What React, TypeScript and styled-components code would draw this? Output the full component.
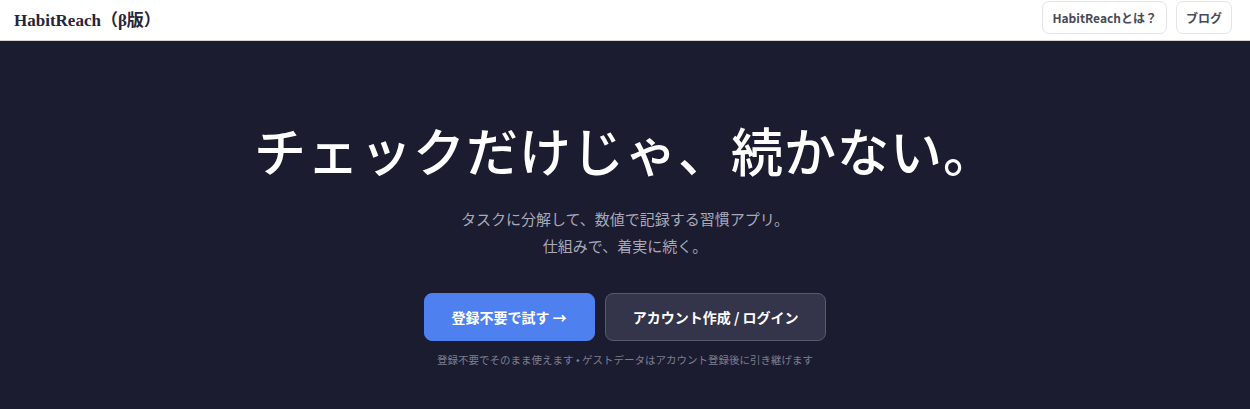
import React from 'react'
import styled, { createGlobalStyle } from 'styled-components'

const GlobalStyle = createGlobalStyle`
    body {
        margin: 0;
        background: #1b1c30;
        font-family: "Noto Sans CJK JP", "Noto Sans", sans-serif;
    }
`

const Header = styled.header`
    height: 40px;
    background: #ffffff;
    border-bottom: 1px solid #d8d4cc;
    display: flex;
    align-items: center;
    justify-content: space-between;
    padding: 0 18px 0 14px;
`

const Logo = styled.div`
    font-family: "Liberation Serif", "Noto Sans CJK JP", serif;
    font-weight: 700;
    font-size: 17px;
    color: #26263a;
    margin-top: -4px;
`

const NavLinks = styled.nav`
    display: flex;
    gap: 9px;
    margin-top: -6px;
`

const NavButton = styled.a`
    height: 31px;
    padding: 0 9px;
    display: flex;
    align-items: center;
    border: 1px solid #e4e4e8;
    border-radius: 7px;
    font-size: 12px;
    font-weight: 700;
    color: #4a4a58;
    text-decoration: none;
    background: #fff;
`

const Hero = styled.main`
    display: flex;
    flex-direction: column;
    align-items: center;
    padding-top: 82px;
    padding-bottom: 40px;
`

const Title = styled.h1`
    margin: 0;
    font-family: "Liberation Serif", "Noto Sans CJK JP", serif;
    font-weight: 500;
    font-size: 52px;
    line-height: 64px;
    color: #ffffff;
    letter-spacing: 1px;
`

const Lead = styled.p`
    margin: 18px 0 0;
    font-size: 15px;
    line-height: 27px;
    color: #a9a9b8;
    text-align: center;
`

const Actions = styled.div`
    display: flex;
    gap: 10px;
    margin-top: 34px;
`

const ActionButton = styled.button<{ $primary?: boolean }>`
    height: 48px;
    padding: 0 27px;
    border-radius: 8px;
    font-family: "Noto Sans CJK JP", sans-serif;
    font-size: 14px;
    font-weight: 700;
    color: #ffffff;
    cursor: pointer;
    background: ${p => (p.$primary ? '#4f80f0' : '#34344a')};
    border: 1px solid ${p => (p.$primary ? '#4f80f0' : '#5a5a6e')};
`

const Note = styled.p`
    margin: 11px 0 0;
    font-size: 10.5px;
    color: #7e7e90;
`

const App = () => {
    return (
        <>
            <GlobalStyle />
            <Header>
                <Logo>HabitReach（β版）</Logo>
                <NavLinks>
                    <NavButton href="#">HabitReachとは？</NavButton>
                    <NavButton href="#">ブログ</NavButton>
                </NavLinks>
            </Header>
            <Hero>
                <Title>チェックだけじゃ、続かない。</Title>
                <Lead>
                    タスクに分解して、数値で記録する習慣アプリ。
                    <br />
                    仕組みで、着実に続く。
                </Lead>
                <Actions>
                    <ActionButton $primary>登録不要で試す →</ActionButton>
                    <ActionButton>アカウント作成 / ログイン</ActionButton>
                </Actions>
                <Note>登録不要でそのまま使えます • ゲストデータはアカウント登録後に引き継げます</Note>
            </Hero>
        </>
    )
}
export default App
